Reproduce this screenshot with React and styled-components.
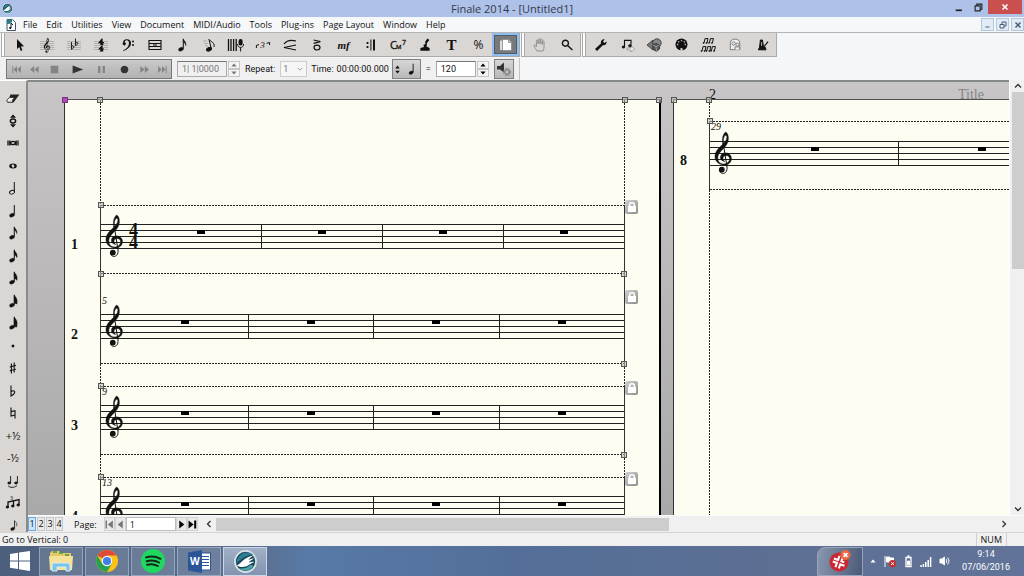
import React, { useState } from "react";
import styled, { createGlobalStyle, css } from "styled-components";

const ui = `"Open Sans", "Noto Sans", sans-serif`;
const serif = `"Liberation Serif", "Times New Roman", serif`;

const GlobalStyle = createGlobalStyle`
	* {
		box-sizing: border-box;
	}

	body {
		margin: 0;
		overflow: hidden;
		font-family: ${ui};
		font-size: 9px;
		color: #111;
	}

	button,
	input,
	select {
		font-family: inherit;
		font-size: inherit;
		color: inherit;
		margin: 0;
		padding: 0;
		border: 0;
		border-radius: 0;
		background: none;
	}

	svg {
		display: block;
		flex: none;
		overflow: visible;
	}
`;

const Window = styled.div`
	display: flex;
	flex-direction: column;
	height: 100vh;
	background: #f5f6f7;
`;

/* title bar and menu */

const TitleBar = styled.header`
	display: grid;
	grid-template-columns: 1fr auto 1fr;
	align-items: center;
	flex: none;
	height: 17px;
	padding: 0 2px;
	background: #aec1e9; // window blue
`;

const Title = styled.h1`
	margin: 0;
	color: #333b4d;
	font-size: 11px;
	font-weight: 400;
	line-height: 17px;
`;

const WindowButtons = styled.div`
	display: flex;
	align-items: flex-start;
	justify-content: flex-end;
	align-self: start;
`;

const WindowButton = styled.button`
	display: flex;
	align-items: center;
	justify-content: center;
	width: ${(p) => (p.$close ? "34px" : "20px")};
	height: 14px;
	color: ${(p) => (p.$close ? "#fff" : "#222")};
	background: ${(p) => (p.$close ? "#c9504f" : "none")};
`;

const MenuBar = styled.nav`
	display: flex;
	align-items: center;
	flex: none;
	gap: 9px;
	height: 16px;
	padding-left: 6px;
	background: #f6f7f9;
	border-bottom: 1px solid #b4b4b4;
`;

const DocumentIcon = styled.svg`
	margin-right: -2px;
`;

const MenuLink = styled.a`
	color: #111;
	line-height: 14px;
	text-decoration: none;
	white-space: nowrap;
`;

const ChildButtons = styled.div`
	display: flex;
	gap: 2px;
	margin-left: auto;
`;

const ChildButton = styled.button`
	display: flex;
	align-items: center;
	justify-content: center;
	width: 13px;
	height: 13px;
	color: #4b5d74;
	background: #e0ebf7;
	border: 1px solid #b5c7da;
`;

/* toolbars */

const ToolRow = styled.div`
	display: flex;
	flex: none;
	gap: 1px;
	height: 25px;
	padding-left: 1px;
`;

const ToolGroup = styled.div`
	display: flex;
	align-items: stretch;
	height: 24px;
	background: #dad6d3;
	border-right: 1px solid #aaa;
	border-bottom: 1px solid #aaa;
`;

const Grip = styled.span`
	flex: none;
	width: 4px;
	margin-right: 1px;
	border-left: 1px solid #aaa;
	border-right: 1px solid #aaa;
	background: #fff;
`;

const ToolButton = styled.button`
	display: flex;
	align-items: center;
	justify-content: center;
	width: 27px;
	color: #111;
	${(p) =>
		p.$active &&
		css`
			color: #fff;
			background: #797979;
			border: 2px solid #8fbdf0;
			outline: 1px solid #4f5b68;
			outline-offset: -3px;
		`}
`;

const Glyph = styled.span`
	font-family: ${(p) => (p.$sans ? ui : serif)};
	font-size: ${(p) => (p.$large ? "15px" : "12px")};
	font-weight: ${(p) => (p.$light ? 400 : 700)};
	font-style: ${(p) => (p.$italic ? "italic" : "normal")};
	line-height: 16px;
`;

const SmallGlyph = styled(Glyph)`
	font-size: 11px;
`;

const PlaybackRow = styled.div`
	display: flex;
	align-items: center;
	align-self: flex-start;
	flex: none;
	height: 22px;
	padding-right: 5px;
	padding-left: 1px;
	font-family: Roboto, ${ui};
	background: #f0f0f0;
	border-right: 1px solid #c4c4c4;
`;

const Transport = styled.div`
	display: grid;
	grid-template-columns: 18px 18px 22px 24px 24px 22px 18px 18px;
	height: 20px;
	margin-right: 5px;
	background: linear-gradient(#c9c9c9, #b2b2b2);
	border: 1px solid #777;
`;

const TransportButton = styled.button`
	display: flex;
	align-items: center;
	justify-content: center;
	color: ${(p) => (p.$on ? "#333" : "#848484")};
`;

const Field = styled.input`
	width: ${(p) => (p.$wide ? "50px" : "40px")};
	height: 16px;
	padding: 0 0 0 4px;
	color: ${(p) => (p.$dim ? "#777" : "#111")};
	background: ${(p) => (p.$dim ? "#f0f0f0" : "#fff")};
	border: 1px solid #aaa;
	border-top-color: #777;
`;

const Spinner = styled.div`
	display: flex;
	flex-direction: column;
	width: 12px;
	height: 16px;
	margin-left: 1px;
`;

const SpinButton = styled.button`
	display: flex;
	align-items: center;
	justify-content: center;
	flex: 1;
	border: 1px solid #c6c6c6;
	background: #f4f4f4;
	color: ${(p) => (p.$dim ? "#777" : "#000")};
`;

const Label = styled.label`
	margin: 0 5px;
	white-space: nowrap;
`;

const TimeLabel = styled.span`
	margin: 0 3px 0 4px;
`;

const PageLabel = styled(Label)`
	margin-left: 10px;
	margin-right: 7px;
`;

const RepeatSelect = styled.select`
	appearance: none;
	width: 16px;
	height: 15px;
	padding-left: 2px;
	color: #777;
`;

const SelectBox = styled.span`
	display: flex;
	align-items: center;
	justify-content: space-between;
	width: 27px;
	height: 16px;
	padding-right: 3px;
	color: #999;
	background: #f6f6f6;
	border: 1px solid #ccc;
`;

const TimeValue = styled.output`
	margin-right: 3px;
`;

const RaisedButton = styled.button`
	display: flex;
	align-items: center;
	justify-content: center;
	gap: 3px;
	width: ${(p) => (p.$wide ? "29px" : "20px")};
	height: 20px;
	margin-left: ${(p) => (p.$wide ? "0" : "5px")};
	background: linear-gradient(#d6d6d6, #b9b9b9);
	border: 1px solid #808080;
`;

/* middle area */

const Middle = styled.main`
	display: flex;
	flex: 1;
	min-height: 0;
`;

const Palette = styled.aside`
	flex: none;
	width: 28px;
	padding-top: 6px;
	overflow: hidden;
	background: #dad6d3;
	border-right: 2px solid #8b8b8b;
	border-top: 1px solid #fff;
`;

const PaletteButton = styled.button`
	display: flex;
	align-items: center;
	justify-content: center;
	width: 26px;
	height: 22px;

	&:nth-child(even) {
		height: 23px;
	}
`;

const Editor = styled.section`
	display: flex;
	flex-direction: column;
	flex: 1;
	min-width: 0;
`;

const ScoreRow = styled.div`
	display: flex;
	flex: 1;
	min-height: 0;
`;

const Desk = styled.div`
	display: flex;
	flex: 1;
	gap: 12px;
	min-width: 0;
	overflow: hidden;
	padding-left: 36px;
	background: linear-gradient(#c8c5c7, #aaa9aa);
	border-top: 2px solid #868a86;
`;

const Sheet = styled.article`
	display: flex;
	flex-direction: column;
	flex: none;
	width: 597px;
`;

const SheetHeader = styled.div`
	display: flex;
	align-items: flex-end;
	flex: none;
	height: 17px;
	padding-left: 36px;
	font-family: ${serif};
	font-size: 14px;
	line-height: 9px;
`;

const SheetTitle = styled.span`
	width: 478px;
	margin-left: 16px;
	text-align: center;
	color: #858585;
`;

const Paper = styled.div`
	position: relative;
	display: flex;
	flex-direction: column;
	flex: 1;
	min-height: 0;
	background: #fdfdf2; // ivory
	border-left: 1px solid #333;
	border-top: 1px solid #4d504d;
	border-right: 2px solid #000;
`;

const dashesDown = "repeating-linear-gradient(180deg, #222 0 2px, transparent 2px 3px)";
const dashesAcross = "repeating-linear-gradient(90deg, #222 0 2px, transparent 2px 3px)";

const Gap = styled.div`
	position: relative;
	flex: ${(p) => (p.$height ? "none" : "1")};
	height: ${(p) => p.$height}px;
	width: 525px;
	margin-left: 35px;
	background-image: ${(p) =>
		p.$solid
			? "linear-gradient(#333, #333), linear-gradient(#333, #333)"
			: `${dashesDown}, ${dashesDown}`};
	background-position: left top, right top;
	background-repeat: no-repeat;
	background-size: 1px 100%;
`;

const SystemRow = styled.div`
	display: grid;
	grid-template-columns: 35px 525px;
	flex: none;
	height: 69px;
`;

const SystemNumber = styled.span`
	padding: 33px 0 0 6px;
	font-family: ${serif};
	font-size: 14px;
	font-weight: 700;
	line-height: 14px;
`;

const SystemBox = styled.div`
	position: relative;
	padding-top: ${(p) => (p.$staffTop ? p.$staffTop : 19)}px;
	border-left: 1px solid #333;
	border-right: 1px solid #333;
	background-image: ${(p) => (p.$open ? "none" : dashesAcross)}, ${dashesAcross};
	background-position: left top, left bottom;
	background-repeat: no-repeat;
	background-size: 100% 1px;
`;

const MeasureNumber = styled.span`
	position: absolute;
	top: 1px;
	left: 1px;
	font-family: ${serif};
	font-size: 10px;
	font-style: italic;
	line-height: 10px;
`;

const Staff = styled.div`
	display: flex;
	height: 25px;
	background: repeating-linear-gradient(#222 0 1px, transparent 1px 6px);
`;

const StaffHead = styled.div`
	display: flex;
	align-items: flex-start;
	flex: none;
	width: ${(p) => (p.$time ? "40px" : "22px")};
	padding-left: 4px;
`;

const TimeSignature = styled.span`
	display: flex;
	flex-direction: column;
	margin-left: 6px;
	font-family: ${serif};
	font-size: 18px;
	font-weight: 700;
	line-height: 12px;
`;

const Measure = styled.div`
	display: flex;
	justify-content: center;
	flex: 1;
	padding-top: 6px;
	border-right: 1px solid #222;

	&:last-child {
		border-right: 0;
	}
`;

const Rest = styled.span`
	width: 8px;
	height: 4px;
	background: #000;
`;

const handlePlaces = {
	tl: css`
		top: -3px;
		left: -3px;
	`,
	tr: css`
		top: -3px;
		right: -3px;
	`,
	bl: css`
		bottom: -3px;
		left: -3px;
	`,
	br: css`
		bottom: -3px;
		right: -3px;
	`,
};

const Handle = styled.span`
	position: absolute;
	z-index: 2;
	width: 6px;
	height: 6px;
	background: ${(p) => (p.$selected ? "#b44bb4" : "rgba(190, 190, 185, 0.6)")};
	border: 1px solid ${(p) => (p.$selected ? "#7a2f80" : "#555")};
	${(p) => handlePlaces[p.$at]}
`;

const LockButton = styled.button`
	position: absolute;
	top: -5px;
	right: -14px;
	display: flex;
	align-items: center;
	justify-content: center;
	width: 13px;
	height: 14px;
	background: linear-gradient(135deg, #d2d2d2, #8c8c8c);
	border-radius: 2px;
`;

const VerticalScroll = styled.div`
	display: flex;
	flex-direction: column;
	align-items: center;
	flex: none;
	width: 15px;
	padding-left: 2px;
	background: #f0f0f0;
	border-left: 1px solid #fff;
`;

const ScrollButton = styled.button`
	display: flex;
	align-items: center;
	justify-content: center;
	flex: none;
	width: 12px;
	height: 12px;
	color: #333;
`;

const DownTrack = styled.div`
	display: flex;
	flex-direction: column;
	align-self: stretch;
	flex: 1;

	&:before {
		content: "";
		flex: 43;
		background: #cdcdcd;
	}

	&:after {
		content: "";
		flex: 57;
	}
`;

const AcrossTrack = styled.div`
	display: flex;
	flex: 1;
	height: 13px;
	margin-left: 1px;

	&:before {
		content: "";
		flex: 58;
		background: #cdcdcd;
	}

	&:after {
		content: "";
		flex: 42;
	}
`;

const ScrollLeft = styled(ScrollButton)`
	margin-left: 5px;
`;

const NavRow = styled.div`
	display: flex;
	align-items: center;
	flex: none;
	height: 17px;
	padding-right: 14px;
	background: #f0f0f0;
	border-top: 1px solid #fafafa;
`;

const LayerButton = styled.button`
	width: 8px;
	height: 14px;
	margin-right: 1px;
	line-height: 12px;
	background: ${(p) => (p.$active ? "#cde5fb" : "#e9e9e9")};
	outline: 1px solid ${(p) => (p.$active ? "#6aa7e0" : "#c8c8c8")};
	outline-offset: -1px;
`;

const PageButton = styled.button`
	display: flex;
	align-items: center;
	justify-content: center;
	width: 11px;
	height: 14px;
	color: ${(p) => (p.$dim ? "#777" : "#000")};
	background: #e9e9e9;
	border: 1px solid #d2d2d2;
`;

const PageField = styled.input`
	width: 50px;
	height: 14px;
	padding: 0 3px;
	background: #fff;
	border: 1px solid #bbb;
`;

const StatusBar = styled.footer`
	display: flex;
	align-items: center;
	justify-content: space-between;
	flex: none;
	height: 14px;
	padding: 0 17px 0 2px;
	background: #f0f0f0;
	border-top: 1px solid #d4d4d4;
`;

const StatusKey = styled.span`
	padding: 0 4px;
	border-left: 1px solid #d0d0d0;
	border-right: 1px solid #d0d0d0;
`;

/* taskbar */

const Taskbar = styled.div`
	display: flex;
	align-items: center;
	flex: none;
	height: 30px;
	color: #fff;
	background: linear-gradient(90deg, #4c5f7c, #5b7193 26%, #587aa6 30%, #536f99 50%, #5d6f93 75%, #617398);
`;

const StartButton = styled.button`
	display: flex;
	justify-content: center;
	width: 39px;
`;

const TaskButton = styled.button`
	display: flex;
	align-items: center;
	justify-content: center;
	width: 44px;
	height: 29px;
	margin-right: 2px;
	background: ${(p) => (p.$active ? "linear-gradient(#a1b0c6, #8294b1)" : "rgba(255, 255, 255, 0.13)")};
	border: 1px solid ${(p) => (p.$active ? "#cdd6e3" : "rgba(220, 230, 245, 0.4)")};
`;

const Tray = styled.div`
	display: flex;
	align-items: center;
	gap: 7px;
	height: 30px;
	margin-left: auto;
	padding-right: 14px;
`;

const AlertButton = styled.button`
	display: flex;
	align-items: center;
	justify-content: center;
	width: 46px;
	height: 29px;
	background: linear-gradient(100deg, #8996ae, #4c5a78);
	border: 1px solid #97a4ba;
	border-radius: 8px 0 0 0;
`;

const Clock = styled.time`
	margin-left: 4px;
	font-family: Roboto, ${ui};
	font-size: 9px;
	line-height: 13px;
	text-align: center;
`;

/* drawings */

const Line = ({ d, w = 1, size = 16, ...rest }) => (
	<svg width={size} height={size} viewBox='0 0 16 16' fill='none' stroke='currentColor' strokeWidth={w} {...rest}>
		<path d={d} />
	</svg>
);

const Solid = ({ d, size = 16, ...rest }) => (
	<svg width={size} height={size} viewBox='0 0 16 16' fill='currentColor' {...rest}>
		<path d={d} />
	</svg>
);

const CLEF_BODY =
	"M11.5 1C13.8 2 14.6 5 14.3 8.5C14 13 11 16 8 19C5 22 3.4 24.5 3.8 28C4.2 31.6 7.3 33.4 10.5 32.9C14 32.4 15.8 30 15.6 27.4C15.4 25.4 13.8 24.4 12 24.5C10 24.6 8.8 26 9 27.8C9.1 29 9.8 29.9 10.8 30.4C8.2 30.2 6.3 28.6 6.4 26.2C6.5 23.4 8.9 21.9 11.5 21.9C14.9 21.9 17.4 24.2 17.4 27.4C17.4 31.5 14.4 34 10.2 34C5 34 1 30.6 1 25.6C1 21 4 17.8 7.2 14.8C10 12 12.9 9.4 12.9 6.4C12.9 4.4 11.9 3.9 11 4.6C9.4 6 9 9 9.6 13L8.8 13C7.9 7.5 8.7 3.5 11.5 1Z";

const ClefShape = () => (
	<>
		<path d={CLEF_BODY} fill='currentColor' stroke='currentColor' strokeWidth='.5' />
		<path
			d='M9.2 12L13 36C13.4 40 11.5 42.6 8.8 42.4C6.6 42.2 5.3 40.5 5.6 38.8'
			fill='none'
			stroke='currentColor'
			strokeWidth='1'
		/>
		<circle cx='7.8' cy='38.6' r='2.9' fill='currentColor' />
	</>
);

const StaffClef = styled.svg`
	margin-top: -10px;
`;

const SmallStaff = () => <path d='M1 4.5H15M1 6.5H15M1 8.5H15M1 10.5H15M1 12.5H15' stroke='#999' strokeWidth='.6' />;

const NoteIcon = ({ flags = 0, hollow, size = 16, straight }) => (
	<svg width={size} height={size} viewBox='0 0 16 16'>
		<ellipse
			cx='7'
			cy='12.2'
			rx='2.6'
			ry='1.8'
			transform='rotate(-22 7 12.2)'
			fill={hollow ? "none" : "#111"}
			stroke='#111'
			strokeWidth={hollow ? 0.9 : 0.3}
		/>
		<path d='M9.3 11.6V2' stroke='#111' strokeWidth='1' />
		{Array.from({ length: flags }, (_, i) => (
			<path
				key={i}
				d={
					straight
						? `M9.3 ${2 + i * 2}C10 ${4 + i * 2} 13.5 ${4.5 + i * 2} 11.6 ${9 + i}`
						: `M9.3 ${1.6 + i * 1.7}C9.6 ${4 + i * 1.7} 13 ${5 + i * 1.5} 11.8 ${9 + i * 0.7}C11.8 ${6.5 + i * 1.5} 10 ${6 + i * 1.5} 9.3 ${4.8 + i * 1.7}Z`
				}
				fill={straight ? "none" : "#111"}
				stroke='#111'
				strokeWidth={straight ? 0.8 : 0.3}
			/>
		))}
	</svg>
);

const SpeedyTool = () => (
	<svg width='16' height='16' viewBox='0 0 16 16' fill='none' stroke='#111'>
		<ellipse cx='8' cy='12.2' rx='2.6' ry='1.7' transform='rotate(-22 8 12.2)' fill='#111' />
		<path d='M10.2 11.4L8 2.4C10 5 14 5.4 13 10' />
		<path d='M2 4H6M3 6.4H7M4 8.8H7' stroke='#999' strokeWidth='.7' />
	</svg>
);

const FinaleIcon = ({ size }) => (
	<svg width={size} height={size} viewBox='0 0 24 24'>
		<circle cx='12' cy='12' r='11' fill='#17475c' stroke='#d9e1e6' strokeWidth='1.8' />
		<path d='M2.4 14C3 7 8 2.6 13.6 2.6C17 2.8 19 4 20 5C14 5 9 8 2.4 14Z' fill='#2e7f91' />
		<path d='M3 16C8 14 10 7.4 20.4 5.4C17 8 16 9 15 10.4C17.4 9 19.4 8.8 21 8.8C17.4 10.6 16.4 12 15.2 13.2C17.4 12.2 19.6 12 21.2 12.4C17 13.8 14.6 17 10.6 17.6C8 18 5 18 3 16Z' fill='#fff' />
		<path d='M5 19C10 20 14 18.6 17 15.6C18.4 15.6 19.6 16 20 16.6C18 20 14.6 21.8 11.6 21.6C9 21.4 6.6 20.6 5 19Z' fill='#4aa5a8' />
	</svg>
);

const TrebleTool = () => (
	<svg width='16' height='16' viewBox='0 0 16 16'>
		<SmallStaff />
		<g transform='translate(4.6 .6) scale(.36)'>
			<ClefShape />
		</g>
	</svg>
);

const KeyTool = () => (
	<svg width='16' height='16' viewBox='0 0 16 16' fill='none' stroke='#111' strokeWidth='.9'>
		<SmallStaff />
		<path d='M5.5 5V12.3C8 11 8.5 9.6 7.4 9C6.6 8.6 5.8 9.3 5.5 9.8M9.5 1.5V8.6C12 7.4 12.4 6 11.4 5.4C10.6 5 9.8 5.8 9.5 6.3' />
	</svg>
);

const TimeTool = () => (
	<svg width='16' height='16' viewBox='0 0 16 16'>
		<SmallStaff />
		<path d='M8.6 1.6L5 6.2H7.6L7 8H10.6L9.6 6.2H11V5H9.6V1.6ZM8.6 8.4L5 12.6H7.6L6.6 14.4H10.6L9.6 12.6H11V11.6H9.6V8.4Z' fill='#111' />
	</svg>
);

const BassTool = () => (
	<svg width='14' height='14' viewBox='1 1 14 14' fill='#111'>
		<path d='M3 13.4C7 11.6 9 9 9 6.2C9 4 8 3 6.6 3.2C5.4 3.3 4.6 4.2 4.7 5.2A1.6 1.6 0 1 1 3.1 5.6C3 3.4 4.7 2.2 6.8 2.2C9.4 2.2 11 3.8 11 6.2C11 9.6 7.6 12.4 3.2 14Z' />
		<circle cx='13' cy='4.4' r='1' />
		<circle cx='13' cy='8' r='1' />
	</svg>
);

const HandTool = () => (
	<Line
		w='.9'
		color='#888'
		d='M5 14C4 12 2.4 10.4 2 8.6C2.4 7.6 3.6 8 4.4 9.6V4C4.6 2.8 6 2.8 6.2 4V7V2.6C6.4 1.4 8 1.4 8.2 2.6V7V3C8.4 1.8 10 1.8 10.2 3V7.4V4.6C10.4 3.6 11.8 3.6 12 4.6V10C12 12 11.4 13 11 14Z'
	/>
);

const MicTool = () => (
	<svg width='18' height='16' viewBox='0 0 18 16'>
		<path d='M1.5 2V14M4 2V14M6.6 2V14M9.2 2V14' stroke='#111' strokeWidth='1.3' />
		<rect x='11.6' y='2' width='4' height='6.6' rx='2' fill='#111' />
		<path d='M10.6 7C10.6 11.6 16.6 11.6 16.6 7M13.6 10.6V14.4' fill='none' stroke='#111' />
	</svg>
);

const tools = [
	["Selection", <Solid d='M5 2L5 12L7.3 10L8.8 14L10.4 13.2L8.9 9.5L12 9.3Z' />],
	["Staff", <TrebleTool />],
	["Key signature", <KeyTool />],
	["Time signature", <TimeTool />],
	["Clef", <BassTool />],
	["Measure", <Line w='1.1' d='M2 3V13M14 3V13M2 3.5H14M2 6.5H14M2 9.5H14M2 12.5H14M6 8H10' />],
	["Simple entry", <NoteIcon flags={1} />],
	["Speedy entry", <SpeedyTool />],
	["HyperScribe", <MicTool />],
	[
		"Tuplet",
		<svg width='18' height='12' viewBox='0 0 18 12' fill='none' stroke='#111'>
			<path d='M2.4 9V6.4L5 5.6M12.6 4.4L15.6 3.4V6' />
			<text x='6.3' y='9' fontFamily='Liberation Serif' fontStyle='italic' fontSize='9' fill='#111' stroke='none'>3</text>
		</svg>,
	],
	["Smart shape", <Line w='1.2' d='M2 7C5 3 10 3 14 4M14 8L2 10.5L14 13' />],
	["Articulation", <Line w='1.2' d='M4.6 3L11.4 4.6L4.6 6.4M11 10.6A3 2.4 0 1 1 5 10.6A3 2.4 0 1 1 11 10.6' />],
	["Expression", <SmallGlyph $italic>mf</SmallGlyph>],
	["Repeat", <Solid d='M3.6 5H5.4V7H3.6ZM3.6 9H5.4V11H3.6ZM7.4 2.6H8.4V13.4H7.4ZM10 2.6H12V13.4H10Z' />],
	[
		"Chord",
		<svg width='16' height='16' viewBox='0 0 16 16' fontFamily='Open Sans' fill='#111' stroke='#111' strokeWidth='.3'>
			<text x='0' y='12' fontSize='11'>C</text>
			<text x='6' y='12' fontSize='6'>M</text>
			<text x='12' y='8' fontSize='7'>7</text>
		</svg>,
	],
	["Lyrics", <Solid d='M10.4 1.4L12.4 3L10 6L9.6 9.6L12.6 11V13.8H3.4V11L7 10L6.4 8L8.6 6.8L8 5Z' />],
	["Text", <Glyph $large>T</Glyph>],
	["Resize", <Glyph $sans $light>%</Glyph>],
	[
		"Page layout",
		<svg width='16' height='16' viewBox='0 0 16 16'>
			<path d='M2 3.5H5V13H2Z' fill='#ddd' />
			<path d='M4.5 2.5H10.5L13.5 5.5V13.5H4.5Z' fill='#fff' stroke='#888' strokeWidth='.8' />
			<path d='M10.5 2.5V5.5H13.5' fill='#ccc' stroke='#888' strokeWidth='.8' />
		</svg>,
	],
];

const viewTools = [
	["Hand grabber", <HandTool />],
	["Zoom", <Line w='1.4' d='M9.4 6.2A3 3 0 1 1 3.4 6.2A3 3 0 1 1 9.4 6.2M8.6 8.4L13.4 13' />],
];

const advancedTools = [
	["Special tools", <Solid d='M2 12L8 6.4C7.4 4 9.4 2 11.6 2.4L10 4.6L11.4 6L13.6 4.6C14 7 12 8.8 9.8 8.2L4 14Z' />],
	[
		"Note mover",
		<svg width='16' height='16' viewBox='0 0 16 16' stroke='#111' fill='#111'>
			<path d='M7 11H11V9L14.6 12L11 15V13H7Z' fill='#eee' stroke='#888' strokeWidth='.7' />
			<path d='M4.5 10V3.4H11V8.6' fill='none' strokeWidth='1.1' />
			<ellipse cx='3.4' cy='10' rx='1.3' ry='1' />
			<ellipse cx='9.9' cy='8.8' rx='1.3' ry='1' />
		</svg>,
	],
	[
		"Graphics",
		<svg width='17' height='16' viewBox='0 0 17 16' stroke='#333' strokeWidth='.8'>
			<path d='M1 8L7 3V13Z' fill='#777' />
			<circle cx='11' cy='6' r='4.2' fill='#888' />
			<path d='M6.4 8L10 6.4L13.6 8V12L10.6 14.4L7 12.6Z' fill='#555' />
			<path d='M6.4 8L10 9.6L13.6 8M10 9.6L10.6 14.4' fill='none' stroke='#aaa' />
		</svg>,
	],
	[
		"MIDI",
		<svg width='15' height='15' viewBox='1 1 14 14'>
			<circle cx='8' cy='8' r='5.6' fill='#111' />
			<path d='M7 14V11.4H9V14Z' fill='#dad6d3' />
			<path d='M4 8H5M5 5.2L5.8 5.9M8 4V5M11 5.2L10.2 5.9M12 8H11' stroke='#ddd' strokeWidth='1.2' />
		</svg>,
	],
	[
		"Ossia",
		<svg width='17' height='18' viewBox='0 0 17 18' fill='none' stroke='#111' strokeWidth='1'>
			<path d='M4 7L5 2.6H8L7 7M9.4 7L10.4 2.6H13.4L12.4 7' />
			<path d='M2 15L3 10.6H6L5 15M6.8 15L7.8 10.6H10.8L9.8 15M11.4 15L12.4 10.6H15.4L14.4 15' />
			<path d='M2.8 7H4.2M5.8 7H7.2M8.4 7H9.6M11.2 7H12.6M.8 15H2.2M3.8 15H5.2M5.8 15H7M8.6 15H10M10.4 15H11.6M13.2 15H14.6' strokeWidth='1.6' />
		</svg>,
	],
	[
		"Mirror",
		<svg width='15' height='15' viewBox='0 0 16 16' fill='#eee' stroke='#777'>
			<path d='M2.5 13.5V6C2.5 1 12.5 1 12.5 6V13.5Z' />
			<circle cx='6' cy='7' r='1.8' />
			<circle cx='10' cy='8' r='1.6' />
			<path d='M7.5 13.5V10.5H12.5V13.5' />
		</svg>,
	],
	[
		"Tempo",
		<svg width='16' height='16' viewBox='0 0 16 16' stroke='#111' fill='none'>
			<path d='M5.4 3H7.4L8.6 10H4.6Z' fill='#111' />
			<path d='M6.6 5V9' stroke='#dad6d3' strokeWidth='.8' />
			<path d='M3.4 12.8L4.4 10.4H10.4L11 12.8Z' fill='#111' />
			<path d='M8 11L13 4.6' strokeWidth='1.2' />
		</svg>,
	],
];

const transport = [
	["Rewind to start", "M2 3H3.4V13H2ZM8.8 3V13L3.8 8ZM14.4 3V13L9.4 8Z"],
	["Rewind", "M7.6 3V13L1.6 8ZM14 3V13L8 8Z"],
	["Stop", "M2.5 2.5H13.5V13.5H2.5Z"],
	["Play", "M2 3L15 8L2 13Z"],
	["Pause", "M3 3H6.4V13H3ZM9.6 3H13V13H9.6Z"],
	["Record", "M8 2.4A5.6 5.6 0 1 1 7.99 2.4Z"],
	["Fast forward", "M2 3V13L8 8ZM8.4 3V13L14.4 8Z"],
	["Forward to end", "M1.6 3V13L6.6 8ZM7.2 3V13L12.2 8ZM12.6 3H14V13H12.6Z"],
];

const palette = [
	[
		"Eraser",
		<svg width='16' height='16' viewBox='0 0 16 16'>
			<path d='M5.4 4.4H14.4L10 10.4L8.4 12.4H3Z' fill='#222' />
			<path d='M1.8 10L4.6 7.4H9.6L7.6 10V12.2H2.4Z' fill='#eee' stroke='#222' strokeWidth='.8' />
		</svg>,
	],
	[
		"Repitch",
		<svg width='16' height='16' viewBox='0 0 16 16' fill='#111'>
			<path d='M5 4.8L8 1.6L11 4.8ZM5 11.2L8 14.4L11 11.2Z' />
			<ellipse cx='8' cy='8' rx='2.6' ry='2' fill='none' stroke='#111' strokeWidth='1.5' />
		</svg>,
	],
	["Double whole note", <Line w='1.3' d='M3 5.4V10.6M4.8 5.4V10.6M11.2 5.4V10.6M13 5.4V10.6M10.4 8A2.4 1.6 0 1 1 5.6 8A2.4 1.6 0 1 1 10.4 8' />],
	[
		"Whole note",
		<svg width='16' height='16' viewBox='0 0 16 16'>
			<ellipse cx='8' cy='8' rx='3.8' ry='2.5' fill='#111' />
			<ellipse cx='8' cy='8' rx='1.3' ry='1.7' transform='rotate(-25 8 8)' fill='#dad6d3' />
		</svg>,
	],
	["Half note", <NoteIcon hollow />],
	["Quarter note", <NoteIcon />],
	["Eighth note", <NoteIcon flags={1} />],
	["Sixteenth note", <NoteIcon flags={2} />],
	["32nd note", <NoteIcon flags={3} />],
	["64th note", <NoteIcon flags={4} />],
	["128th note", <NoteIcon flags={5} />],
	["Dot", <Solid d='M8 6.6A1.4 1.4 0 1 1 7.99 6.6Z' />],
	["Sharp", <Line w='1.1' d='M6.4 3.4V13.4M9.2 2.6V12.6M4.8 7L10.8 5.4M4.8 10.8L10.8 9.2' />],
	["Flat", <Line w='1.1' d='M6 2.4V13C9 11.4 10.6 9.4 9.4 8.2C8.4 7.4 6.8 8.2 6 9' />],
	["Natural", <Line w='1.1' d='M6 2.6V11L10 10M10 13.6V5.6L6 6.6' />],
	["Half step up", <SmallGlyph $sans $light>+½</SmallGlyph>],
	["Half step down", <SmallGlyph $sans $light>-½</SmallGlyph>],
	[
		"Tie",
		<svg width='16' height='16' viewBox='0 0 16 16' fill='none' stroke='#111'>
			<path d='M5.6 10V3M12.4 10V3M3 12.6C5 15 9 15 12 12.6' strokeWidth='.9' />
			<ellipse cx='4.2' cy='10' rx='1.4' ry='.9' fill='#111' />
			<ellipse cx='11' cy='10' rx='1.4' ry='.9' fill='#111' />
		</svg>,
	],
	[
		"Tuplet",
		<svg width='16' height='16' viewBox='0 0 16 16' fill='#111' stroke='#111'>
			<path d='M3 12V7L14 4.6V10M8.5 11V5.8' fill='none' strokeWidth='1.3' />
			<ellipse cx='2.4' cy='12' rx='1.3' ry='1' />
			<ellipse cx='7.8' cy='11' rx='1.3' ry='1' />
			<ellipse cx='13.2' cy='10' rx='1.3' ry='1' />
			<text x='5' y='4.8' fontSize='6' stroke='none' fontFamily='Liberation Serif'>3</text>
		</svg>,
	],
	["Grace note", <NoteIcon flags={1} straight size={13} />],
];

const menus = ["File", "Edit", "Utilities", "View", "Document", "MIDI/Audio", "Tools", "Plug-ins", "Page Layout", "Window", "Help"];

const Arrow = ({ d, size = 8 }) => <Line size={size} w='2.6' d={d} />;

const ToolSet = ({ items, active, onPick }) => (
	<ToolGroup>
		<Grip />
		{items.map(([name, icon]) => (
			<ToolButton key={name} aria-label={name} $active={name === active} onClick={() => onPick(name)}>
				{icon}
			</ToolButton>
		))}
	</ToolGroup>
);

const Spin = ({ dim }) => (
	<Spinner>
		<SpinButton $dim={dim} aria-label='Increase'>
			<Solid size={6} d='M1 12L8 4L15 12Z' />
		</SpinButton>
		<SpinButton $dim={dim} aria-label='Decrease'>
			<Solid size={6} d='M1 4L8 12L15 4Z' />
		</SpinButton>
	</Spinner>
);

const System = ({ number, first, measures = 4, time, open, staffTop, handles = [], lock }) => (
	<SystemRow>
		<SystemNumber>{number}</SystemNumber>
		<SystemBox $open={open} $staffTop={staffTop}>
			{first && <MeasureNumber>{first}</MeasureNumber>}
			<Staff>
				<StaffHead $time={time}>
					<StaffClef width='18' height='44' viewBox='0 0 18 44'>
						<ClefShape />
					</StaffClef>
					{time && (
						<TimeSignature>
							<span>4</span>
							<span>4</span>
						</TimeSignature>
					)}
				</StaffHead>
				{Array.from({ length: measures }, (_, i) => (
					<Measure key={i}>
						<Rest />
					</Measure>
				))}
			</Staff>
			{handles.map((at) => (
				<Handle key={at} $at={at} />
			))}
			{lock && (
				<LockButton aria-label={`Unlock system ${number}`}>
					<svg width='8' height='10' viewBox='0 0 8 10'>
						<path d='M1.6 5V3C1.6 0 6.4 0 6.4 3V5' fill='none' stroke='#fff' strokeWidth='1.6' />
						<rect y='4' width='8' height='6' fill='#fff' />
					</svg>
				</LockButton>
			)}
		</SystemBox>
	</SystemRow>
);

const App = () => {
	const [tool, setTool] = useState("Page layout");
	const [layer, setLayer] = useState(1);

	return (
		<Window>
			<GlobalStyle />
			<TitleBar>
				<FinaleIcon size={11} />
				<Title>Finale 2014 - [Untitled1]</Title>
				<WindowButtons>
					<WindowButton aria-label='Minimize'>
						<Line size={9} w='3' d='M3 13H14' />
					</WindowButton>
					<WindowButton aria-label='Restore'>
						<Line size={9} w='2' d='M2 5H11V14H2ZM5 5V2H14V11H11' />
					</WindowButton>
					<WindowButton $close aria-label='Close'>
						<Line size={8} w='3' d='M3 3L13 13M13 3L3 13' />
					</WindowButton>
				</WindowButtons>
			</TitleBar>
			<MenuBar>
				<DocumentIcon width='10' height='12' viewBox='0 0 10 12'>
					<path d='M1 .5H6.5L9.5 3.5V11.5H1Z' fill='#fff' stroke='#456' />
					<path d='M1 .5H6V3L3 5H1Z' fill='#2b7d85' />
					<path d='M5 9V4L7 6' fill='none' stroke='#111' />
					<circle cx='4.2' cy='9' r='1.1' />
				</DocumentIcon>
				{menus.map((m) => (
					<MenuLink key={m} href='#'>
						{m}
					</MenuLink>
				))}
				<ChildButtons>
					<ChildButton aria-label='Minimize document'>
						<Line size={8} w='2' d='M3 12H11' />
					</ChildButton>
					<ChildButton aria-label='Restore document'>
						<Line size={8} w='2' d='M2 7H10V14H2ZM6 7V2H14V10H10' />
					</ChildButton>
					<ChildButton aria-label='Close document'>
						<Line size={8} w='3' d='M3 3L13 13M13 3L3 13' />
					</ChildButton>
				</ChildButtons>
			</MenuBar>
			<ToolRow>
				<ToolSet items={tools} active={tool} onPick={setTool} />
				<ToolSet items={viewTools} active={tool} onPick={setTool} />
				<ToolSet items={advancedTools} active={tool} onPick={setTool} />
			</ToolRow>
			<PlaybackRow>
				<Grip />
				<Transport>
					{transport.map(([name, d]) => (
						<TransportButton key={name} aria-label={name} $on={name === "Play" || name === "Record"}>
							<Solid size={name === "Play" ? 13 : 11} d={d} />
						</TransportButton>
					))}
				</Transport>
				<Field $wide $dim aria-label='Counter' defaultValue='1| 1|0000' />
				<Spin dim />
				<Label htmlFor='repeat'>Repeat:</Label>
				<SelectBox>
					<RepeatSelect id='repeat'>
						<option>1</option>
					</RepeatSelect>
					<Arrow size={6} d='M2 5L8 11L14 5' />
				</SelectBox>
				<TimeLabel>Time:</TimeLabel>
				<TimeValue>00:00:00.000</TimeValue>
				<RaisedButton $wide aria-label='Beat unit'>
					<Solid size={9} d='M4 6L8 1L12 6ZM4 10L8 15L12 10Z' />
					<NoteIcon size={14} />
				</RaisedButton>
				<Label htmlFor='tempo'>=</Label>
				<Field id='tempo' defaultValue='120' />
				<Spin />
				<RaisedButton aria-label='Playback settings'>
					<svg width='16' height='16' viewBox='0 0 16 16'>
						<path d='M1 5H4L8 1.6V11.4L4 8.6H1Z' fill='#333' />
						<circle cx='11' cy='11' r='3' fill='none' stroke='#888' strokeWidth='2' strokeDasharray='1.6 .8' />
						<circle cx='11' cy='11' r='2' fill='none' stroke='#888' />
					</svg>
				</RaisedButton>
			</PlaybackRow>
			<Middle>
				<Palette>
					{palette.map(([name, icon]) => (
						<PaletteButton key={name} aria-label={name}>
							{icon}
						</PaletteButton>
					))}
				</Palette>
				<Editor>
					<ScoreRow>
						<Desk>
							<Sheet>
								<SheetHeader />
								<Paper>
									<Handle $at='tl' $selected />
									<Handle $at='tr' />
									<Gap $height={105}>
										<Handle $at='tl' />
										<Handle $at='tr' />
									</Gap>
									<System number={1} time handles={["tl", "bl", "br"]} lock />
									<Gap $height={21} $solid />
									<System number={2} first={5} open handles={["br"]} lock />
									<Gap $height={22} />
									<System number={3} first={9} handles={["tl", "br"]} lock />
									<Gap $height={22} />
									<System number={4} first={13} handles={["tl"]} lock />
								</Paper>
							</Sheet>
							<Sheet>
								<SheetHeader>
									2<SheetTitle>Title</SheetTitle>
								</SheetHeader>
								<Paper>
									<Handle $at='tl' />
									<Gap $height={21}>
										<Handle $at='tl' />
									</Gap>
									<System number={8} first={29} measures={3} staffTop={20} handles={["tl"]} />
									<Gap />
								</Paper>
							</Sheet>
						</Desk>
						<VerticalScroll>
							<ScrollButton aria-label='Scroll up'>
								<Arrow d='M2 11L8 5L14 11' />
							</ScrollButton>
							<DownTrack />
							<ScrollButton aria-label='Scroll down'>
								<Arrow d='M2 5L8 11L14 5' />
							</ScrollButton>
						</VerticalScroll>
					</ScoreRow>
					<NavRow>
						{[1, 2, 3, 4].map((n) => (
							<LayerButton key={n} $active={n === layer} onClick={() => setLayer(n)}>
								{n}
							</LayerButton>
						))}
						<PageLabel htmlFor='page'>Page:</PageLabel>
						<PageButton $dim aria-label='First page'>
							<Solid size={9} d='M1 1H3.6V15H1ZM14 1V15L5 8Z' />
						</PageButton>
						<PageButton $dim aria-label='Previous page'>
							<Solid size={9} d='M12 1V15L3 8Z' />
						</PageButton>
						<PageField id='page' defaultValue='1' />
						<PageButton aria-label='Next page'>
							<Solid size={9} d='M4 1V15L13 8Z' />
						</PageButton>
						<PageButton aria-label='Last page'>
							<Solid size={9} d='M1 1V15L10 8ZM11 1H14.6V15H11Z' />
						</PageButton>
						<ScrollLeft aria-label='Scroll left'>
							<Arrow d='M11 2L5 8L11 14' />
						</ScrollLeft>
						<AcrossTrack />
						<ScrollButton aria-label='Scroll right'>
							<Arrow d='M5 2L11 8L5 14' />
						</ScrollButton>
					</NavRow>
				</Editor>
			</Middle>
			<StatusBar>
				<span>Go to Vertical: 0</span>
				<StatusKey>NUM</StatusKey>
			</StatusBar>
			<Taskbar>
				<StartButton aria-label='Start'>
					<svg width='20' height='20' viewBox='0 0 20 20' fill='#fff'>
						<path d='M0 3L8 1.8V9.4H0ZM9 1.6L20 0V9.4H9ZM0 10.4H8V18L0 16.8ZM9 10.4H20V20L9 18.2Z' />
					</svg>
				</StartButton>
				<TaskButton aria-label='File Explorer'>
					<svg width='24' height='23' viewBox='0 0 24 23'>
						<path d='M1 3L3 1H10L12 3H22V20H1Z' fill='#e8c766' />
						<path d='M4 2H8M10 3H14M16 5H20' stroke='#3a9d52' strokeWidth='1.6' />
						<path d='M0 6H24L23 20H1Z' fill='#f7e29a' />
						<path d='M3 21V15C3 13 5 13 6 13H18C20 13 21 14 21 16V21H17V17H8V21Z' fill='#7cc3ea' stroke='#d5eefb' />
					</svg>
				</TaskButton>
				<TaskButton aria-label='Chrome'>
					<svg width='22' height='22' viewBox='0 0 22 22'>
						<circle cx='11' cy='11' r='11' fill='#fbc116' />
						<path d='M11 11L1.5 5.5A11 11 0 0 1 20.5 5.5H11Z' fill='#de4a3c' />
						<path d='M1.5 5.5A11 11 0 0 0 11 22L15.8 13.7L6.2 13.7Z' fill='#2aa152' />
						<circle cx='11' cy='11' r='5.2' fill='#fff' />
						<circle cx='11' cy='11' r='4.1' fill='#437fe8' />
					</svg>
				</TaskButton>
				<TaskButton aria-label='Spotify'>
					<svg width='24' height='24' viewBox='0 0 24 24'>
						<circle cx='12' cy='12' r='12' fill='#20d760' />
						<path d='M5 8.4C10 7 15 7.4 19.4 9.8M5.6 12.2C10 11 14.4 11.4 18 13.5M6.2 15.8C10 14.8 13.6 15.2 16.8 17' stroke='#14251a' strokeWidth='2' strokeLinecap='round' fill='none' />
					</svg>
				</TaskButton>
				<TaskButton aria-label='Word'>
					<svg width='23' height='23' viewBox='0 0 23 23'>
						<rect x='11' y='3' width='11.5' height='17' fill='#fff' stroke='#2a5699' />
						<path d='M14 6.5H21M14 9.5H21M14 12.5H21M14 15.5H21' stroke='#2a5699' strokeWidth='1.2' />
						<path d='M0 2.6L14 0V23L0 20.4Z' fill='#2a5699' />
						<text x='2' y='15.4' fontFamily='Open Sans' fontSize='10' fontWeight='700' fill='#fff'>W</text>
					</svg>
				</TaskButton>
				<TaskButton $active aria-label='Finale'>
					<FinaleIcon size={23} />
				</TaskButton>
				<Tray>
					<AlertButton aria-label='Alerts'>
						<svg width='22' height='22' viewBox='0 0 22 22' stroke='#fff'>
							<circle cx='10' cy='12' r='9.6' fill='#c92a33' stroke='none' />
							<path
								transform='rotate(20 10 12)'
								d='M8.4 6V10.4H4M12 6V10.4H15M8.4 18V13.6H4M12 18V13.6H16.4'
								strokeWidth='2'
								fill='none'
							/>
							<circle cx='16.5' cy='5' r='5' fill='#ee6a43' stroke='none' />
							<path d='M14.6 3.1L18.4 6.9M18.4 3.1L14.6 6.9' strokeWidth='1.6' />
						</svg>
					</AlertButton>
					<Solid size={6} d='M1 12L8 4L15 12Z' />
					<svg width='14' height='13' viewBox='0 0 13 13'>
						<path d='M1.5 1V12M3 2H6L7 3H10V8H7L6 7H3Z' fill='#fff' stroke='#fff' />
						<circle cx='9' cy='8.6' r='3.6' fill='#c9302c' />
						<path d='M7.6 7.2L10.4 10M10.4 7.2L7.6 10' stroke='#fff' />
					</svg>
					<svg width='9' height='13' viewBox='0 0 8 13' fill='none' stroke='#fff'>
						<path d='M1.5 2.5H6.5V11.5H1.5ZM3 1H5' strokeWidth='1.3' />
						<path d='M3 6H5V10H3Z' fill='#fff' />
					</svg>
					<svg width='12' height='11' viewBox='0 0 12 11' stroke='#fff' strokeWidth='1.5'>
						<path d='M1 11V9M3.4 11V8M5.8 11V6M8.2 11V4M10.6 11V1' />
					</svg>
					<svg width='12' height='12' viewBox='0 0 12 12' fill='none' stroke='#fff'>
						<path d='M1 4H3L5.4 2V10L3 8H1Z' fill='#fff' />
						<path d='M7 4C8 5 8 7 7 8M8.6 2.6C10.4 4.6 10.4 7.4 8.6 9.4' />
					</svg>
					<Clock>
						9:14
						<br />
						07/06/2016
					</Clock>
				</Tray>
			</Taskbar>
		</Window>
	);
};

export default App;
